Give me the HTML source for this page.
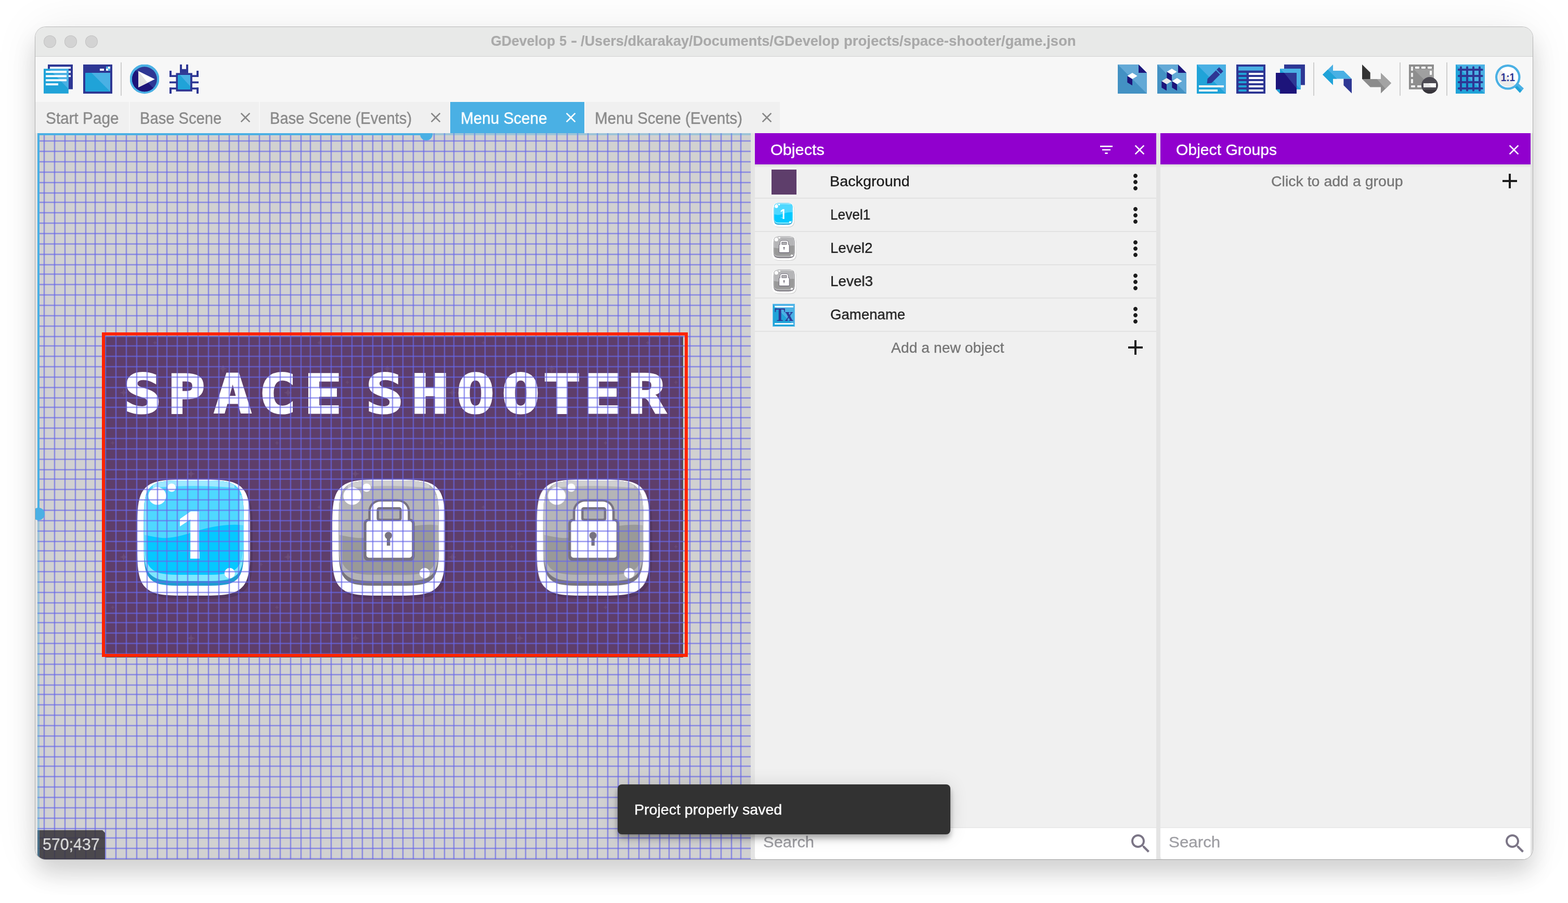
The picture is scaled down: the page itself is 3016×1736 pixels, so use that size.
<!DOCTYPE html>
<html lang="en"><head><meta charset="utf-8"><title>GDevelop 5 - /Users/dkarakay/Documents/GDevelop projects/space-shooter/game.json</title>
<style>
html,body{margin:0;padding:0;background:#fff}
body{width:3016px;height:1736px;position:relative;overflow:hidden;font-family:"Liberation Sans",sans-serif}
.ab{position:absolute;display:block}
.t{position:absolute;white-space:nowrap;transform-origin:0 0;display:block;will-change:transform;-webkit-text-stroke:.35px currentColor}
.blur{filter:blur(.6px)}
h1,h2,ul,li{margin:0;padding:0;font:inherit;list-style:none}
#shadow{position:absolute;left:68px;top:52px;width:2880px;height:1600px;border-radius:20px;box-shadow:0 0 0 1px rgba(0,0,0,.25),0 28px 44px rgba(0,0,0,.15),0 0 90px rgba(0,0,0,.07)}
#win{position:absolute;left:68px;top:52px;width:2880px;height:1600px;border-radius:20px;overflow:hidden;background:#e4e4e4}
#o{position:absolute;left:-68px;top:-52px;width:3016px;height:1736px}
</style></head>
<body>
<div id="shadow"></div>
<div id="win"><div id="o">
<header class="titlebar">
<div class="ab" style="left:68px;top:52px;width:2880px;height:56px;background:#e8e9e8"></div>
<div class="ab" style="left:68px;top:108px;width:2880px;height:1px;background:#d2d2d2"></div>
<div class="ab" style="left:84px;top:68px;width:24px;height:24px;border-radius:50%;background:#d3d3d3;box-shadow:inset 0 0 0 1px #c3c3c3"></div>
<div class="ab" style="left:124px;top:68px;width:24px;height:24px;border-radius:50%;background:#d3d3d3;box-shadow:inset 0 0 0 1px #c3c3c3"></div>
<div class="ab" style="left:164px;top:68px;width:24px;height:24px;border-radius:50%;background:#d3d3d3;box-shadow:inset 0 0 0 1px #c3c3c3"></div>
<h1 class="wtitle">
<span class="t" style="left:943.72px;top:61.64px;font-size:27px;line-height:34px;color:#a9a9a9;font-weight:bold;-webkit-text-stroke:.2px currentColor;transform:scaleX(0.9844)">GDevelop</span>
 
<span class="t" style="left:1076.30px;top:61.64px;font-size:27px;line-height:34px;color:#a9a9a9;font-weight:bold;-webkit-text-stroke:.2px currentColor;transform:scaleX(0.9267)">5</span>
 
<span class="t" style="left:1098.34px;top:61.64px;font-size:27px;line-height:34px;color:#a9a9a9;font-weight:bold;-webkit-text-stroke:.2px currentColor;transform:scaleX(1.3571)">-</span>
 
<span class="t" style="left:1117.10px;top:61.64px;font-size:27px;line-height:34px;color:#a9a9a9;font-weight:bold;-webkit-text-stroke:.2px currentColor;transform:scaleX(1.0046)">/Users/dkarakay/Documents/GDevelop</span>
 
<span class="t" style="left:1622.58px;top:61.64px;font-size:27px;line-height:34px;color:#a9a9a9;font-weight:bold;-webkit-text-stroke:.2px currentColor;transform:scaleX(1.0192)">projects/space-shooter/game.json</span>
 
</h1>
</header>
<div class="toolbar" role="toolbar">
<div class="ab" style="left:68px;top:109px;width:2880px;height:87px;background:#f7f7f7"></div>
<svg class="ab" style="left:84px;top:124px" width="56" height="57" viewBox="0 0 56 57" role="img" aria-label="Project manager"><rect x="8" y="0" width="48" height="47.5" fill="#2e3794"/><rect x="12" y="4.3" width="40" height="3.8" fill="#fff"/><rect x="48" y="12.2" width="4" height="4" fill="#fff"/><rect x="48" y="20.4" width="4" height="3.7" fill="#fff"/><rect x="0" y="8.2" width="47.8" height="47.6" fill="#20a3d8"/><path d="M10 8.2H47.8V47z" fill="#4ab0e4"/><rect x="4" y="12.2" width="40" height="3.9" fill="#fff"/><rect x="4" y="20.4" width="40" height="3.9" fill="#fff"/><rect x="4" y="28.3" width="40" height="3.9" fill="#fff"/><rect x="4" y="36.2" width="24" height="3.9" fill="#fff"/></svg>
<svg class="ab" style="left:160px;top:124px" width="56" height="57" viewBox="0 0 56 57" role="img" aria-label="Open the start page"><rect x="0" y="0" width="56" height="56" fill="#2e3794"/><rect x="4" y="16" width="48" height="36" rx="1" fill="#20a3d8"/><path d="M16 16H52V52z" fill="#4ab0e4"/><rect x="32" y="8" width="8" height="4" fill="#fff"/><rect x="44" y="4" width="8" height="8" fill="#fff"/><rect x="44" y="4" width="4" height="4" fill="#4ab0e4"/><rect x="48" y="8" width="4" height="4" fill="#4ab0e4"/></svg>
<svg class="ab" style="left:250.3px;top:124px" width="56" height="57" viewBox="0 0 56 57" role="img" aria-label="Launch a preview"><circle cx="28" cy="27.8" r="28.4" fill="#4ab0e4"/><path d="M8.2 48.1A28 28 0 0 1 8.2 8.5 28 28 0 0 0 47.8 48.1 28 28 0 0 1 8.2 48.1z" fill="#20a3d8"/><circle cx="28" cy="28.3" r="24" fill="#2e3794"/><path d="M11 45.3A24 24 0 0 1 11 11.3L28 28.3 45 45.3A24 24 0 0 1 11 45.3z" fill="#1d147a"/><path d="M16 12.6L47.8 28.3 16 44z" fill="#fff"/><path d="M16 12.6L34 35.2 16 44z" fill="#e2e2e2"/></svg>
<svg class="ab" style="left:326px;top:124px" width="56" height="57" viewBox="0 0 56 57" role="img" aria-label="Debugger"><rect x="20" y="0" width="4" height="9" fill="#2e3794"/><rect x="32" y="0" width="4" height="9" fill="#2e3794"/><rect x="20" y="8.8" width="16" height="8" fill="#2e3794"/><rect x="0" y="12" width="4" height="12" fill="#2e3794"/><rect x="0" y="20.3" width="13" height="3.6999999999999993" fill="#2e3794"/><rect x="0" y="32.5" width="13" height="3.700000000000003" fill="#2e3794"/><rect x="0" y="44.3" width="13" height="3.700000000000003" fill="#2e3794"/><rect x="0" y="44.3" width="4" height="11.700000000000003" fill="#2e3794"/><rect x="52" y="12" width="4" height="12" fill="#2e3794"/><rect x="43" y="20.3" width="13" height="3.6999999999999993" fill="#2e3794"/><rect x="43" y="32.5" width="13" height="3.700000000000003" fill="#2e3794"/><rect x="43" y="44.3" width="13" height="3.700000000000003" fill="#2e3794"/><rect x="52" y="44.3" width="4" height="11.700000000000003" fill="#2e3794"/><rect x="12.5" y="16.4" width="31.4" height="35.4" fill="#2e3794"/><rect x="16" y="20" width="24" height="28" rx="1" fill="#20a3d8"/><path d="M20 20H40V42z" fill="#4ab0e4"/></svg>
<svg class="ab" style="left:2150px;top:124px" width="56" height="57" viewBox="0 0 56 57" role="img" aria-label="Objects editor"><path d="M0 0H40L56 16V56H0z" fill="#63a9d6"/><path d="M0 0L56 56H0z" fill="#4391c3"/><path d="M40 0L56 16H40z" fill="#1d147a"/><path d="M18.3 22L28 16L37.7 22L28 28z" fill="#fff"/><path d="M18.3 22L28 28V40.2L18.3 34.4z" fill="#1d147a"/></svg>
<svg class="ab" style="left:2226px;top:124px" width="56" height="57" viewBox="0 0 56 57" role="img" aria-label="Object groups editor"><path d="M0 0H40L56 16V56H0z" fill="#63a9d6"/><path d="M0 0L56 56H0z" fill="#4391c3"/><path d="M40 0L56 16H40z" fill="#1d147a"/><path d="M18.3 14L28 8L37.7 14L28 20z" fill="#fff"/><path d="M18.3 14L28 20V32.2L18.3 26.4z" fill="#1d147a"/><path d="M8.3 32L18 26L27.7 32L18 38z" fill="#e9e9e9"/><path d="M8.3 32L18 38V50.2L8.3 44.4z" fill="#1d147a"/><path d="M28.3 32L38 26L47.7 32L38 38z" fill="#fff"/><path d="M28.3 32L38 38V50.2L28.3 44.4z" fill="#1d147a"/></svg>
<svg class="ab" style="left:2302px;top:124px" width="56" height="57" viewBox="0 0 56 57" role="img" aria-label="Properties"><rect width="56" height="56" fill="#4ab0e4"/><path d="M0 0L56 56H0z" fill="#20a3d8"/><g transform="translate(19.6 36.4) rotate(-45)"><path d="M0 0L7 -5.6H30V5.6H7z" fill="#2e3794"/><rect x="31.6" y="-5.6" width="7" height="11.2" fill="#2e3794"/></g><rect x="4" y="40" width="48" height="4" fill="#f4f4f4"/><rect x="4" y="48" width="36" height="4" fill="#f4f4f4"/></svg>
<svg class="ab" style="left:2378px;top:124px" width="56" height="57" viewBox="0 0 56 57" role="img" aria-label="Instances list"><rect width="56" height="56" fill="#2e3794"/><rect x="4" y="4" width="48" height="7.6" fill="#4ab0e4"/><rect x="4" y="16" width="16" height="4" rx="2" fill="#20a3d8"/><rect x="24" y="16" width="28" height="4" fill="#fff"/><rect x="4" y="24" width="16" height="4" rx="2" fill="#20a3d8"/><rect x="24" y="24" width="28" height="4" fill="#fff"/><rect x="4" y="32" width="16" height="4" rx="2" fill="#20a3d8"/><rect x="24" y="32" width="28" height="4" fill="#fff"/><rect x="4" y="40" width="16" height="4" rx="2" fill="#20a3d8"/><rect x="24" y="40" width="28" height="4" fill="#fff"/><rect x="4" y="48" width="16" height="4" rx="2" fill="#20a3d8"/><rect x="24" y="48" width="28" height="4" fill="#fff"/></svg>
<svg class="ab" style="left:2454px;top:124px" width="56" height="57" viewBox="0 0 56 57" role="img" aria-label="Layers"><rect x="16" y="0" width="40" height="39.5" fill="#2e3794"/><rect x="8" y="8" width="40" height="39.7" fill="#4ab0e4"/><path d="M8 8L16 16H8z" fill="#20a3d8"/><path d="M40 39.7L48 47.7H40z" fill="#20a3d8"/><rect x="0" y="16" width="40" height="40" fill="#1d147a"/><path d="M16 16H40V46z" fill="#2e3794"/><path d="M0 47.7H8V56z" fill="#20a3d8"/><path d="M0 47.7V56H8z" fill="#f7f7f7"/></svg>
<svg class="ab" style="left:2544px;top:124px" width="56" height="57" viewBox="0 0 56 57" role="img" aria-label="Undo"><path d="M0 19.4L20 0V12H40.4L56 27.4H20V39.4z" fill="#4ab0e4"/><path d="M0 19.4L10 9.7 27.6 27.4H20V39.4z" fill="#20a3d8"/><path d="M40.4 27.4H56V55.6L40.4 40z" fill="#2e3794"/></svg>
<svg class="ab" style="left:2620px;top:124px" width="56" height="57" viewBox="0 0 56 57" role="img" aria-label="Redo"><path d="M0 0L15.7 15.5V28H0z" fill="#333"/><path d="M0 28H36V16.2L56 35.8L36 55.6V43.4H15.7z" fill="#8c8c8c"/><path d="M28.5 28H36V16.2L56 35.8L45 46.7z" fill="#a3a3a3"/></svg>
<svg class="ab" style="left:2710px;top:124px" width="56" height="57" viewBox="0 0 56 57" role="img" aria-label="Delete the selected instances"><rect x="0" y="0" width="48" height="47.8" fill="#8e8e8e"/><path d="M9 9H48V47.8z" fill="#a0a0a0"/><rect x="12" y="4" width="8" height="4" rx="1" fill="#fff"/><rect x="24" y="4" width="8" height="4" rx="1" fill="#fff"/><rect x="36" y="4" width="8" height="4" rx="1" fill="#fff"/><rect x="4" y="4" width="4" height="8" rx="1" fill="#f0f0f0"/><rect x="4" y="16" width="4" height="8" rx="1" fill="#f0f0f0"/><rect x="4" y="28" width="4" height="8" rx="1" fill="#f0f0f0"/><rect x="40" y="12" width="4" height="8" rx="1" fill="#fff"/><rect x="4" y="40" width="8" height="4" rx="1" fill="#f0f0f0"/><rect x="16" y="40" width="8" height="4" rx="1" fill="#f0f0f0"/><circle cx="40" cy="40" r="16" fill="#4c4a52"/><path d="M26.4 48.5A16 16 0 0 0 53.6 48.5z" fill="#37353b"/><rect x="28" y="36" width="24" height="8" fill="#fff"/><path d="M28 36H38L44 44H28z" fill="#e8e8e8"/></svg>
<svg class="ab" style="left:2800px;top:124px" width="56" height="57" viewBox="0 0 56 57" role="img" aria-label="Toggle grid"><rect width="56" height="56" fill="#4ab0e4"/><path d="M0 0L56 56H0z" fill="#20a3d8"/><path d="M16 16H40V40z M16 16z" fill="#4ab0e4" opacity=".0"/><rect x="8" y="3.5" width="4" height="48" rx="1.5" fill="#2e3794"/><rect x="4" y="8" width="48.5" height="4" rx="1.5" fill="#2e3794"/><rect x="20" y="3.5" width="4" height="48" rx="1.5" fill="#2e3794"/><rect x="4" y="20" width="48.5" height="4" rx="1.5" fill="#2e3794"/><rect x="32" y="3.5" width="4" height="48" rx="1.5" fill="#2e3794"/><rect x="4" y="32" width="48.5" height="4" rx="1.5" fill="#2e3794"/><rect x="44" y="3.5" width="4" height="48" rx="1.5" fill="#2e3794"/><rect x="4" y="44" width="48.5" height="4" rx="1.5" fill="#2e3794"/></svg>
<svg class="ab" style="left:2874px;top:124px" width="58" height="57" viewBox="0 0 58 57" role="img" aria-label="Zoom"><path d="M36 40L43 33 57 46 49.5 54.5z" fill="#4ab0e4"/><path d="M36 40L39.5 36.5 53.2 50.3 49.5 54.5z" fill="#20a3d8"/><circle cx="26.3" cy="24.3" r="24.3" fill="#4ab0e4"/><circle cx="26.3" cy="24.3" r="20" fill="#fff"/><path d="M12.2 10.2A20 20 0 0 0 40.4 38.4z" fill="#ebebeb"/><text x="26.4" y="31.8" text-anchor="middle" style="font-family:'Liberation Sans',sans-serif" font-weight="bold" font-size="22" fill="#2e3794" textLength="27.5" lengthAdjust="spacingAndGlyphs">1:1</text></svg>
<div class="ab" style="left:232px;top:120px;width:2px;height:64px;background:#cfcfcf"></div>
<div class="ab" style="left:2526px;top:120px;width:2px;height:64px;background:#cfcfcf"></div>
<div class="ab" style="left:2692px;top:120px;width:2px;height:64px;background:#cfcfcf"></div>
<div class="ab" style="left:2782px;top:120px;width:2px;height:64px;background:#cfcfcf"></div>
</div>
<nav class="tabs" role="tablist">
<div class="ab" style="left:68px;top:196px;width:2880px;height:60px;background:#f7f7f7"></div>
<div role="tab" aria-selected="false">
<div class="ab" style="left:68px;top:196px;width:180px;height:60px;background:#f0f0f0"></div>
<span class="t" style="left:87.79px;top:207.76px;font-size:31px;line-height:39px;color:#878787;transform:scaleX(0.9592)">Start Page</span>
</div>
<div role="tab" aria-selected="false">
<div class="ab" style="left:250px;top:196px;width:248px;height:60px;background:#f0f0f0"></div>
<span class="t" style="left:268.72px;top:207.76px;font-size:31px;line-height:39px;color:#878787;transform:scaleX(0.9400)">Base Scene</span>
<svg class="ab" style="left:455.7px;top:210.2px" width="32" height="32" viewBox="0 0 24 24"><path d="M19 6.41L17.59 5 12 10.59 6.41 5 5 6.41 10.59 12 5 17.59 6.41 19 12 13.41 17.59 19 19 17.59 13.41 12z" fill="#878787"/></svg>
</div>
<div role="tab" aria-selected="false">
<div class="ab" style="left:500px;top:196px;width:364px;height:60px;background:#f0f0f0"></div>
<span class="t" style="left:518.63px;top:207.76px;font-size:31px;line-height:39px;color:#878787;transform:scaleX(0.9372)">Base Scene (Events)</span>
<svg class="ab" style="left:822.2px;top:210.2px" width="32" height="32" viewBox="0 0 24 24"><path d="M19 6.41L17.59 5 12 10.59 6.41 5 5 6.41 10.59 12 5 17.59 6.41 19 12 13.41 17.59 19 19 17.59 13.41 12z" fill="#878787"/></svg>
</div>
<div role="tab" aria-selected="true">
<div class="ab" style="left:866px;top:196px;width:258px;height:60px;background:#4ab0e4"></div>
<span class="t" style="left:885.99px;top:207.76px;font-size:31px;line-height:39px;color:#fff;transform:scaleX(0.9560)">Menu Scene</span>
<svg class="ab" style="left:1082.0px;top:210.2px" width="32" height="32" viewBox="0 0 24 24"><path d="M19 6.41L17.59 5 12 10.59 6.41 5 5 6.41 10.59 12 5 17.59 6.41 19 12 13.41 17.59 19 19 17.59 13.41 12z" fill="#fff"/></svg>
</div>
<div role="tab" aria-selected="false">
<div class="ab" style="left:1126px;top:196px;width:374px;height:60px;background:#f0f0f0"></div>
<span class="t" style="left:1144.29px;top:207.76px;font-size:31px;line-height:39px;color:#878787;transform:scaleX(0.9526)">Menu Scene (Events)</span>
<svg class="ab" style="left:1458.7px;top:210.2px" width="32" height="32" viewBox="0 0 24 24"><path d="M19 6.41L17.59 5 12 10.59 6.41 5 5 6.41 10.59 12 5 17.59 6.41 19 12 13.41 17.59 19 19 17.59 13.41 12z" fill="#878787"/></svg>
</div>
</nav>
<div class="ab" style="left:68px;top:256px;width:2880px;height:1396px;background:#e4e4e4"></div>
<main class="scene-editor">
<svg class="ab" id="scene" style="left:72px;top:256px" width="1372" height="1396" viewBox="0 0 1372 1396"><defs><clipPath id="cb"><path d="M205.0 103.0L204.9 136.9L204.7 147.7L204.3 155.5L203.7 161.8L202.9 167.1L202.0 171.8L200.9 175.9L199.6 179.5L198.2 182.8L196.5 185.8L194.6 188.5L192.5 190.9L190.2 193.1L187.7 195.1L184.8 196.8L181.7 198.4L178.2 199.7L174.3 200.9L169.9 201.8L164.8 202.6L158.8 203.2L151.4 203.7L141.1 203.9L108.8 204.0L76.4 203.9L66.1 203.7L58.7 203.2L52.7 202.6L47.6 201.8L43.2 200.9L39.3 199.7L35.8 198.4L32.7 196.8L29.8 195.1L27.3 193.1L25.0 190.9L22.9 188.5L21.0 185.8L19.3 182.8L17.9 179.5L16.6 175.9L15.5 171.8L14.6 167.1L13.8 161.8L13.2 155.5L12.8 147.7L12.6 136.9L12.5 103.0L12.6 69.1L12.8 58.3L13.2 50.5L13.8 44.2L14.6 38.9L15.5 34.2L16.6 30.1L17.9 26.5L19.3 23.2L21.0 20.2L22.9 17.5L25.0 15.1L27.3 12.9L29.8 10.9L32.7 9.2L35.8 7.6L39.3 6.3L43.2 5.1L47.6 4.2L52.7 3.4L58.7 2.8L66.1 2.3L76.4 2.1L108.7 2.0L141.1 2.1L151.4 2.3L158.8 2.8L164.8 3.4L169.9 4.2L174.3 5.1L178.2 6.3L181.7 7.6L184.8 9.2L187.7 10.9L190.2 12.9L192.5 15.1L194.6 17.5L196.5 20.2L198.2 23.2L199.6 26.5L200.9 30.1L202.0 34.2L202.9 38.9L203.7 44.2L204.3 50.5L204.7 58.3L204.9 69.1z"/></clipPath><clipPath id="cb9"><path d="M205.0 94.0L204.9 127.9L204.7 138.7L204.3 146.5L203.7 152.8L202.9 158.1L202.0 162.8L200.9 166.9L199.6 170.5L198.2 173.8L196.5 176.8L194.6 179.5L192.5 181.9L190.2 184.1L187.7 186.1L184.8 187.8L181.7 189.4L178.2 190.7L174.3 191.9L169.9 192.8L164.8 193.6L158.8 194.2L151.4 194.7L141.1 194.9L108.8 195.0L76.4 194.9L66.1 194.7L58.7 194.2L52.7 193.6L47.6 192.8L43.2 191.9L39.3 190.7L35.8 189.4L32.7 187.8L29.8 186.1L27.3 184.1L25.0 181.9L22.9 179.5L21.0 176.8L19.3 173.8L17.9 170.5L16.6 166.9L15.5 162.8L14.6 158.1L13.8 152.8L13.2 146.5L12.8 138.7L12.6 127.9L12.5 94.0L12.6 60.1L12.8 49.3L13.2 41.5L13.8 35.2L14.6 29.9L15.5 25.2L16.6 21.1L17.9 17.5L19.3 14.2L21.0 11.2L22.9 8.5L25.0 6.1L27.3 3.9L29.8 1.9L32.7 0.2L35.8 -1.4L39.3 -2.7L43.2 -3.9L47.6 -4.8L52.7 -5.6L58.7 -6.2L66.1 -6.7L76.4 -6.9L108.7 -7.0L141.1 -6.9L151.4 -6.7L158.8 -6.2L164.8 -5.6L169.9 -4.8L174.3 -3.9L178.2 -2.7L181.7 -1.4L184.8 0.2L187.7 1.9L190.2 3.9L192.5 6.1L194.6 8.5L196.5 11.2L198.2 14.2L199.6 17.5L200.9 21.1L202.0 25.2L202.9 29.9L203.7 35.2L204.3 41.5L204.7 49.3L204.9 60.1z"/></clipPath><clipPath id="cb21"><path d="M204.0 82.0L203.9 115.9L203.7 126.7L203.3 134.5L202.7 140.8L201.9 146.1L201.0 150.8L199.9 154.9L198.7 158.5L197.2 161.8L195.6 164.8L193.7 167.5L191.7 169.9L189.4 172.1L186.8 174.1L184.0 175.8L180.9 177.4L177.5 178.7L173.6 179.9L169.2 180.8L164.2 181.6L158.3 182.2L150.9 182.7L140.7 182.9L108.8 183.0L76.8 182.9L66.6 182.7L59.2 182.2L53.3 181.6L48.3 180.8L43.9 179.9L40.0 178.7L36.6 177.4L33.5 175.8L30.7 174.1L28.1 172.1L25.8 169.9L23.8 167.5L21.9 164.8L20.3 161.8L18.8 158.5L17.6 154.9L16.5 150.8L15.6 146.1L14.8 140.8L14.2 134.5L13.8 126.7L13.6 115.9L13.5 82.0L13.6 48.1L13.8 37.3L14.2 29.5L14.8 23.2L15.6 17.9L16.5 13.2L17.6 9.1L18.8 5.5L20.3 2.2L21.9 -0.8L23.8 -3.5L25.8 -5.9L28.1 -8.1L30.7 -10.1L33.5 -11.8L36.6 -13.4L40.0 -14.7L43.9 -15.9L48.3 -16.8L53.3 -17.6L59.2 -18.2L66.6 -18.7L76.8 -18.9L108.7 -19.0L140.7 -18.9L150.9 -18.7L158.3 -18.2L164.2 -17.6L169.2 -16.8L173.6 -15.9L177.5 -14.7L180.9 -13.4L184.0 -11.8L186.8 -10.1L189.4 -8.1L191.7 -5.9L193.7 -3.5L195.6 -0.8L197.2 2.2L198.7 5.5L199.9 9.1L201.0 13.2L201.9 17.9L202.7 23.2L203.3 29.5L203.7 37.3L203.9 48.1z"/></clipPath><symbol id="btn1" viewBox="0 0 223 230" preserveAspectRatio="none"><path d="M217.0 111.5L216.9 144.7L216.6 156.6L216.1 165.4L215.3 172.6L214.4 178.8L213.2 184.3L211.9 189.1L210.3 193.4L208.5 197.4L206.4 200.9L204.1 204.2L201.5 207.1L198.7 209.7L195.5 212.1L192.1 214.2L188.2 216.1L184.0 217.7L179.3 219.1L174.0 220.3L168.0 221.3L161.0 222.0L152.4 222.6L140.8 222.9L108.5 223.0L76.2 222.9L64.6 222.6L56.0 222.0L49.0 221.3L43.0 220.3L37.7 219.1L33.0 217.7L28.8 216.1L24.9 214.2L21.5 212.1L18.3 209.7L15.5 207.1L12.9 204.2L10.6 200.9L8.5 197.4L6.7 193.4L5.1 189.1L3.8 184.3L2.6 178.8L1.7 172.6L0.9 165.4L0.4 156.6L0.1 144.7L0.0 111.5L0.1 78.3L0.4 66.4L0.9 57.6L1.7 50.4L2.6 44.2L3.8 38.7L5.1 33.9L6.7 29.6L8.5 25.6L10.6 22.1L12.9 18.8L15.5 15.9L18.3 13.3L21.5 10.9L24.9 8.8L28.8 6.9L33.0 5.3L37.7 3.9L43.0 2.7L49.0 1.7L56.0 1.0L64.6 0.4L76.2 0.1L108.5 0.0L140.8 0.1L152.4 0.4L161.0 1.0L168.0 1.7L174.0 2.7L179.3 3.9L184.0 5.3L188.2 6.9L192.1 8.8L195.5 10.9L198.7 13.3L201.5 15.9L204.1 18.8L206.4 22.1L208.5 25.6L210.3 29.6L211.9 33.9L213.2 38.7L214.4 44.2L215.3 50.4L216.1 57.6L216.6 66.4L216.9 78.3z" transform="translate(5 6)" fill="#000" opacity=".12"/><path d="M217.0 111.5L216.9 144.7L216.6 156.6L216.1 165.4L215.3 172.6L214.4 178.8L213.2 184.3L211.9 189.1L210.3 193.4L208.5 197.4L206.4 200.9L204.1 204.2L201.5 207.1L198.7 209.7L195.5 212.1L192.1 214.2L188.2 216.1L184.0 217.7L179.3 219.1L174.0 220.3L168.0 221.3L161.0 222.0L152.4 222.6L140.8 222.9L108.5 223.0L76.2 222.9L64.6 222.6L56.0 222.0L49.0 221.3L43.0 220.3L37.7 219.1L33.0 217.7L28.8 216.1L24.9 214.2L21.5 212.1L18.3 209.7L15.5 207.1L12.9 204.2L10.6 200.9L8.5 197.4L6.7 193.4L5.1 189.1L3.8 184.3L2.6 178.8L1.7 172.6L0.9 165.4L0.4 156.6L0.1 144.7L0.0 111.5L0.1 78.3L0.4 66.4L0.9 57.6L1.7 50.4L2.6 44.2L3.8 38.7L5.1 33.9L6.7 29.6L8.5 25.6L10.6 22.1L12.9 18.8L15.5 15.9L18.3 13.3L21.5 10.9L24.9 8.8L28.8 6.9L33.0 5.3L37.7 3.9L43.0 2.7L49.0 1.7L56.0 1.0L64.6 0.4L76.2 0.1L108.5 0.0L140.8 0.1L152.4 0.4L161.0 1.0L168.0 1.7L174.0 2.7L179.3 3.9L184.0 5.3L188.2 6.9L192.1 8.8L195.5 10.9L198.7 13.3L201.5 15.9L204.1 18.8L206.4 22.1L208.5 25.6L210.3 29.6L211.9 33.9L213.2 38.7L214.4 44.2L215.3 50.4L216.1 57.6L216.6 66.4L216.9 78.3z" fill="#fff"/><path d="M205.0 103.0L204.9 136.9L204.7 147.7L204.3 155.5L203.7 161.8L202.9 167.1L202.0 171.8L200.9 175.9L199.6 179.5L198.2 182.8L196.5 185.8L194.6 188.5L192.5 190.9L190.2 193.1L187.7 195.1L184.8 196.8L181.7 198.4L178.2 199.7L174.3 200.9L169.9 201.8L164.8 202.6L158.8 203.2L151.4 203.7L141.1 203.9L108.8 204.0L76.4 203.9L66.1 203.7L58.7 203.2L52.7 202.6L47.6 201.8L43.2 200.9L39.3 199.7L35.8 198.4L32.7 196.8L29.8 195.1L27.3 193.1L25.0 190.9L22.9 188.5L21.0 185.8L19.3 182.8L17.9 179.5L16.6 175.9L15.5 171.8L14.6 167.1L13.8 161.8L13.2 155.5L12.8 147.7L12.6 136.9L12.5 103.0L12.6 69.1L12.8 58.3L13.2 50.5L13.8 44.2L14.6 38.9L15.5 34.2L16.6 30.1L17.9 26.5L19.3 23.2L21.0 20.2L22.9 17.5L25.0 15.1L27.3 12.9L29.8 10.9L32.7 9.2L35.8 7.6L39.3 6.3L43.2 5.1L47.6 4.2L52.7 3.4L58.7 2.8L66.1 2.3L76.4 2.1L108.7 2.0L141.1 2.1L151.4 2.3L158.8 2.8L164.8 3.4L169.9 4.2L174.3 5.1L178.2 6.3L181.7 7.6L184.8 9.2L187.7 10.9L190.2 12.9L192.5 15.1L194.6 17.5L196.5 20.2L198.2 23.2L199.6 26.5L200.9 30.1L202.0 34.2L202.9 38.9L203.7 44.2L204.3 50.5L204.7 58.3L204.9 69.1z" fill="#1f9dd2"/><g clip-path="url(#cb)"><path d="M205.0 94.0L204.9 127.9L204.7 138.7L204.3 146.5L203.7 152.8L202.9 158.1L202.0 162.8L200.9 166.9L199.6 170.5L198.2 173.8L196.5 176.8L194.6 179.5L192.5 181.9L190.2 184.1L187.7 186.1L184.8 187.8L181.7 189.4L178.2 190.7L174.3 191.9L169.9 192.8L164.8 193.6L158.8 194.2L151.4 194.7L141.1 194.9L108.8 195.0L76.4 194.9L66.1 194.7L58.7 194.2L52.7 193.6L47.6 192.8L43.2 191.9L39.3 190.7L35.8 189.4L32.7 187.8L29.8 186.1L27.3 184.1L25.0 181.9L22.9 179.5L21.0 176.8L19.3 173.8L17.9 170.5L16.6 166.9L15.5 162.8L14.6 158.1L13.8 152.8L13.2 146.5L12.8 138.7L12.6 127.9L12.5 94.0L12.6 60.1L12.8 49.3L13.2 41.5L13.8 35.2L14.6 29.9L15.5 25.2L16.6 21.1L17.9 17.5L19.3 14.2L21.0 11.2L22.9 8.5L25.0 6.1L27.3 3.9L29.8 1.9L32.7 0.2L35.8 -1.4L39.3 -2.7L43.2 -3.9L47.6 -4.8L52.7 -5.6L58.7 -6.2L66.1 -6.7L76.4 -6.9L108.7 -7.0L141.1 -6.9L151.4 -6.7L158.8 -6.2L164.8 -5.6L169.9 -4.8L174.3 -3.9L178.2 -2.7L181.7 -1.4L184.8 0.2L187.7 1.9L190.2 3.9L192.5 6.1L194.6 8.5L196.5 11.2L198.2 14.2L199.6 17.5L200.9 21.1L202.0 25.2L202.9 29.9L203.7 35.2L204.3 41.5L204.7 49.3L204.9 60.1z" fill="#7de8ff"/><g clip-path="url(#cb21)"><rect width="217" height="223" fill="#05c8ff"/><path d="M0 0H217V90C190 83 150 88 119 97.6C95 105 70 114 47 112C30 110 20 107 0 104z" fill="#4fd8ff"/><path d="M30 0H187V16C140 11 77 11 30 16z" fill="#fff" opacity="0.45"/><rect x="12" y="30" width="8" height="150" fill="#fff" opacity="0.32"/><rect x="197" y="30" width="9" height="150" fill="#fff" opacity="0.32"/></g></g><circle cx="38.5" cy="31.6" r="17" fill="#fff"/><circle cx="66.2" cy="15.5" r="8" fill="#fff"/><circle cx="177.8" cy="179.8" r="10" fill="#fff"/><clipPath id="c1"><path d="M0 -95.0H49.6V2H30.6V-13.8H0z"/></clipPath><g transform="translate(73.8 152) scale(0.924 1)"><text clip-path="url(#c1)" style="font-family:'Liberation Sans',sans-serif" font-weight="bold" font-size="131.9" fill="#fff">1</text></g></symbol><symbol id="btn2" viewBox="0 0 223 230" preserveAspectRatio="none"><path d="M217.0 111.5L216.9 144.7L216.6 156.6L216.1 165.4L215.3 172.6L214.4 178.8L213.2 184.3L211.9 189.1L210.3 193.4L208.5 197.4L206.4 200.9L204.1 204.2L201.5 207.1L198.7 209.7L195.5 212.1L192.1 214.2L188.2 216.1L184.0 217.7L179.3 219.1L174.0 220.3L168.0 221.3L161.0 222.0L152.4 222.6L140.8 222.9L108.5 223.0L76.2 222.9L64.6 222.6L56.0 222.0L49.0 221.3L43.0 220.3L37.7 219.1L33.0 217.7L28.8 216.1L24.9 214.2L21.5 212.1L18.3 209.7L15.5 207.1L12.9 204.2L10.6 200.9L8.5 197.4L6.7 193.4L5.1 189.1L3.8 184.3L2.6 178.8L1.7 172.6L0.9 165.4L0.4 156.6L0.1 144.7L0.0 111.5L0.1 78.3L0.4 66.4L0.9 57.6L1.7 50.4L2.6 44.2L3.8 38.7L5.1 33.9L6.7 29.6L8.5 25.6L10.6 22.1L12.9 18.8L15.5 15.9L18.3 13.3L21.5 10.9L24.9 8.8L28.8 6.9L33.0 5.3L37.7 3.9L43.0 2.7L49.0 1.7L56.0 1.0L64.6 0.4L76.2 0.1L108.5 0.0L140.8 0.1L152.4 0.4L161.0 1.0L168.0 1.7L174.0 2.7L179.3 3.9L184.0 5.3L188.2 6.9L192.1 8.8L195.5 10.9L198.7 13.3L201.5 15.9L204.1 18.8L206.4 22.1L208.5 25.6L210.3 29.6L211.9 33.9L213.2 38.7L214.4 44.2L215.3 50.4L216.1 57.6L216.6 66.4L216.9 78.3z" transform="translate(5 6)" fill="#000" opacity=".12"/><path d="M217.0 111.5L216.9 144.7L216.6 156.6L216.1 165.4L215.3 172.6L214.4 178.8L213.2 184.3L211.9 189.1L210.3 193.4L208.5 197.4L206.4 200.9L204.1 204.2L201.5 207.1L198.7 209.7L195.5 212.1L192.1 214.2L188.2 216.1L184.0 217.7L179.3 219.1L174.0 220.3L168.0 221.3L161.0 222.0L152.4 222.6L140.8 222.9L108.5 223.0L76.2 222.9L64.6 222.6L56.0 222.0L49.0 221.3L43.0 220.3L37.7 219.1L33.0 217.7L28.8 216.1L24.9 214.2L21.5 212.1L18.3 209.7L15.5 207.1L12.9 204.2L10.6 200.9L8.5 197.4L6.7 193.4L5.1 189.1L3.8 184.3L2.6 178.8L1.7 172.6L0.9 165.4L0.4 156.6L0.1 144.7L0.0 111.5L0.1 78.3L0.4 66.4L0.9 57.6L1.7 50.4L2.6 44.2L3.8 38.7L5.1 33.9L6.7 29.6L8.5 25.6L10.6 22.1L12.9 18.8L15.5 15.9L18.3 13.3L21.5 10.9L24.9 8.8L28.8 6.9L33.0 5.3L37.7 3.9L43.0 2.7L49.0 1.7L56.0 1.0L64.6 0.4L76.2 0.1L108.5 0.0L140.8 0.1L152.4 0.4L161.0 1.0L168.0 1.7L174.0 2.7L179.3 3.9L184.0 5.3L188.2 6.9L192.1 8.8L195.5 10.9L198.7 13.3L201.5 15.9L204.1 18.8L206.4 22.1L208.5 25.6L210.3 29.6L211.9 33.9L213.2 38.7L214.4 44.2L215.3 50.4L216.1 57.6L216.6 66.4L216.9 78.3z" fill="#fff"/><path d="M205.0 103.0L204.9 136.9L204.7 147.7L204.3 155.5L203.7 161.8L202.9 167.1L202.0 171.8L200.9 175.9L199.6 179.5L198.2 182.8L196.5 185.8L194.6 188.5L192.5 190.9L190.2 193.1L187.7 195.1L184.8 196.8L181.7 198.4L178.2 199.7L174.3 200.9L169.9 201.8L164.8 202.6L158.8 203.2L151.4 203.7L141.1 203.9L108.8 204.0L76.4 203.9L66.1 203.7L58.7 203.2L52.7 202.6L47.6 201.8L43.2 200.9L39.3 199.7L35.8 198.4L32.7 196.8L29.8 195.1L27.3 193.1L25.0 190.9L22.9 188.5L21.0 185.8L19.3 182.8L17.9 179.5L16.6 175.9L15.5 171.8L14.6 167.1L13.8 161.8L13.2 155.5L12.8 147.7L12.6 136.9L12.5 103.0L12.6 69.1L12.8 58.3L13.2 50.5L13.8 44.2L14.6 38.9L15.5 34.2L16.6 30.1L17.9 26.5L19.3 23.2L21.0 20.2L22.9 17.5L25.0 15.1L27.3 12.9L29.8 10.9L32.7 9.2L35.8 7.6L39.3 6.3L43.2 5.1L47.6 4.2L52.7 3.4L58.7 2.8L66.1 2.3L76.4 2.1L108.7 2.0L141.1 2.1L151.4 2.3L158.8 2.8L164.8 3.4L169.9 4.2L174.3 5.1L178.2 6.3L181.7 7.6L184.8 9.2L187.7 10.9L190.2 12.9L192.5 15.1L194.6 17.5L196.5 20.2L198.2 23.2L199.6 26.5L200.9 30.1L202.0 34.2L202.9 38.9L203.7 44.2L204.3 50.5L204.7 58.3L204.9 69.1z" fill="#78757d"/><g clip-path="url(#cb)"><path d="M205.0 94.0L204.9 127.9L204.7 138.7L204.3 146.5L203.7 152.8L202.9 158.1L202.0 162.8L200.9 166.9L199.6 170.5L198.2 173.8L196.5 176.8L194.6 179.5L192.5 181.9L190.2 184.1L187.7 186.1L184.8 187.8L181.7 189.4L178.2 190.7L174.3 191.9L169.9 192.8L164.8 193.6L158.8 194.2L151.4 194.7L141.1 194.9L108.8 195.0L76.4 194.9L66.1 194.7L58.7 194.2L52.7 193.6L47.6 192.8L43.2 191.9L39.3 190.7L35.8 189.4L32.7 187.8L29.8 186.1L27.3 184.1L25.0 181.9L22.9 179.5L21.0 176.8L19.3 173.8L17.9 170.5L16.6 166.9L15.5 162.8L14.6 158.1L13.8 152.8L13.2 146.5L12.8 138.7L12.6 127.9L12.5 94.0L12.6 60.1L12.8 49.3L13.2 41.5L13.8 35.2L14.6 29.9L15.5 25.2L16.6 21.1L17.9 17.5L19.3 14.2L21.0 11.2L22.9 8.5L25.0 6.1L27.3 3.9L29.8 1.9L32.7 0.2L35.8 -1.4L39.3 -2.7L43.2 -3.9L47.6 -4.8L52.7 -5.6L58.7 -6.2L66.1 -6.7L76.4 -6.9L108.7 -7.0L141.1 -6.9L151.4 -6.7L158.8 -6.2L164.8 -5.6L169.9 -4.8L174.3 -3.9L178.2 -2.7L181.7 -1.4L184.8 0.2L187.7 1.9L190.2 3.9L192.5 6.1L194.6 8.5L196.5 11.2L198.2 14.2L199.6 17.5L200.9 21.1L202.0 25.2L202.9 29.9L203.7 35.2L204.3 41.5L204.7 49.3L204.9 60.1z" fill="#b4b4b6"/><g clip-path="url(#cb21)"><rect width="217" height="223" fill="#999999"/><path d="M0 0H217V90C190 83 150 88 119 97.6C95 105 70 114 47 112C30 110 20 107 0 104z" fill="#b5b5b7"/><path d="M30 0H187V16C140 11 77 11 30 16z" fill="#fff" opacity="0.35"/><rect x="12" y="30" width="8" height="150" fill="#fff" opacity="0.24"/><rect x="197" y="30" width="9" height="150" fill="#fff" opacity="0.24"/></g></g><circle cx="38.5" cy="31.6" r="17" fill="#fff"/><circle cx="66.2" cy="15.5" r="8" fill="#fff"/><circle cx="177.8" cy="179.8" r="10" fill="#fff"/><rect x="69.4" y="37.8" width="80.4" height="60" rx="24" fill="#77727f"/><rect x="60.5" y="75.3" width="98.2" height="81.3" rx="9" fill="#77727f"/><rect x="73.9" y="42.3" width="71.4" height="55" rx="19" fill="#fff"/><rect x="65.8" y="79.8" width="87.5" height="70.5" rx="5" fill="#fff"/><rect x="85.5" y="53" width="48.2" height="26.8" rx="5" fill="#77727f"/><rect x="90" y="57.5" width="39.2" height="17.8" rx="2" fill="#b2b2b4"/><circle cx="108.1" cy="107.5" r="7" fill="#77727f"/><rect x="105" y="110" width="6.4" height="17" fill="#77727f"/></symbol></defs><rect width="1372" height="1396" fill="#d1d1d1"/><rect x="131" y="391" width="1110" height="616" fill="#5e3e6b"/><defs><pattern id="stars" x="131" y="391" width="316" height="316" patternUnits="userSpaceOnUse"><g fill="#7a5f88" stroke="#7a5f88" stroke-width="1.2"><path d="M226 55Q226 62 233 62Q226 62 226 69Q226 62 219 62Q226 62 226 55z" opacity="0.4"/><path d="M35 101Q35 108 42 108Q35 108 35 115Q35 108 28 108Q35 108 35 101z" opacity="0.4"/><path d="M164.5 257Q164.5 264 171.5 264Q164.5 264 164.5 271Q164.5 264 157.5 264Q164.5 264 164.5 257z" opacity="0.4"/><path d="M95 8.5Q95 12 98.5 12Q95 12 95 15.5Q95 12 91.5 12Q95 12 95 8.5z" opacity="0.35"/><path d="M149 84.5Q149 88 152.5 88Q149 88 149 91.5Q149 88 145.5 88Q149 88 149 84.5z" opacity="0.3"/><path d="M299 118.5Q299 122 302.5 122Q299 122 299 125.5Q299 122 295.5 122Q299 122 299 118.5z" opacity="0.3"/><path d="M13.7 201.0Q13.7 204.5 17.2 204.5Q13.7 204.5 13.7 208.0Q13.7 204.5 10.2 204.5Q13.7 204.5 13.7 201.0z" opacity="0.3"/><path d="M155 153.4Q155 156.4 158 156.4Q155 156.4 155 159.4Q155 156.4 152 156.4Q155 156.4 155 153.4z" opacity="0.25"/></g></pattern></defs><rect x="131" y="391" width="1110" height="616" fill="url(#stars)"/><rect x="131" y="391" width="1110" height="616" fill="none" stroke="#505050" stroke-width="2"/><g style="filter:blur(.6px)"><text transform="translate(0 538.0) scale(1.166 1)" x="142.4 214.7 291.0 364.9 439.9 491.2 541.6 616.9 691.5 766.1 834.0 901.3 974.2" y="0" style="font-family:'DejaVu Sans Mono',monospace" font-weight="bold" font-size="103.5" fill="#fff" stroke="#fff" stroke-width="3.2" stroke-linejoin="miter">SPACE SHOOTER</text><use href="#btn1" x="192" y="666" width="223" height="230"/><use href="#btn2" x="567" y="666" width="223" height="230"/><use href="#btn2" x="960.5" y="666" width="223" height="230"/></g><g fill="#6868e8" shape-rendering="crispEdges"><path d="M11 0h4v1396h-4zM31 0h4v1396h-4zM51 0h4v1396h-4zM71 0h4v1396h-4zM91 0h4v1396h-4zM109 0h4v1396h-4zM129 0h4v1396h-4zM149 0h4v1396h-4zM169 0h4v1396h-4zM189 0h4v1396h-4zM209 0h4v1396h-4zM229 0h4v1396h-4zM247 0h4v1396h-4zM267 0h4v1396h-4zM287 0h4v1396h-4zM307 0h4v1396h-4zM327 0h4v1396h-4zM347 0h4v1396h-4zM367 0h4v1396h-4zM385 0h4v1396h-4zM405 0h4v1396h-4zM425 0h4v1396h-4zM445 0h4v1396h-4zM465 0h4v1396h-4zM485 0h4v1396h-4zM505 0h4v1396h-4zM523 0h4v1396h-4zM543 0h4v1396h-4zM563 0h4v1396h-4zM583 0h4v1396h-4zM603 0h4v1396h-4zM623 0h4v1396h-4zM643 0h4v1396h-4zM661 0h4v1396h-4zM681 0h4v1396h-4zM701 0h4v1396h-4zM721 0h4v1396h-4zM741 0h4v1396h-4zM761 0h4v1396h-4zM781 0h4v1396h-4zM799 0h4v1396h-4zM819 0h4v1396h-4zM839 0h4v1396h-4zM859 0h4v1396h-4zM879 0h4v1396h-4zM899 0h4v1396h-4zM919 0h4v1396h-4zM937 0h4v1396h-4zM957 0h4v1396h-4zM977 0h4v1396h-4zM997 0h4v1396h-4zM1017 0h4v1396h-4zM1037 0h4v1396h-4zM1057 0h4v1396h-4zM1075 0h4v1396h-4zM1095 0h4v1396h-4zM1115 0h4v1396h-4zM1135 0h4v1396h-4zM1155 0h4v1396h-4zM1175 0h4v1396h-4zM1195 0h4v1396h-4zM1213 0h4v1396h-4zM1233 0h4v1396h-4zM1253 0h4v1396h-4zM1273 0h4v1396h-4zM1293 0h4v1396h-4zM1313 0h4v1396h-4zM1333 0h4v1396h-4zM1351 0h4v1396h-4z" opacity=".2"/><path d="M12 0h2v1396h-2zM32 0h2v1396h-2zM52 0h2v1396h-2zM72 0h2v1396h-2zM92 0h2v1396h-2zM110 0h2v1396h-2zM130 0h2v1396h-2zM150 0h2v1396h-2zM170 0h2v1396h-2zM190 0h2v1396h-2zM210 0h2v1396h-2zM230 0h2v1396h-2zM248 0h2v1396h-2zM268 0h2v1396h-2zM288 0h2v1396h-2zM308 0h2v1396h-2zM328 0h2v1396h-2zM348 0h2v1396h-2zM368 0h2v1396h-2zM386 0h2v1396h-2zM406 0h2v1396h-2zM426 0h2v1396h-2zM446 0h2v1396h-2zM466 0h2v1396h-2zM486 0h2v1396h-2zM506 0h2v1396h-2zM524 0h2v1396h-2zM544 0h2v1396h-2zM564 0h2v1396h-2zM584 0h2v1396h-2zM604 0h2v1396h-2zM624 0h2v1396h-2zM644 0h2v1396h-2zM662 0h2v1396h-2zM682 0h2v1396h-2zM702 0h2v1396h-2zM722 0h2v1396h-2zM742 0h2v1396h-2zM762 0h2v1396h-2zM782 0h2v1396h-2zM800 0h2v1396h-2zM820 0h2v1396h-2zM840 0h2v1396h-2zM860 0h2v1396h-2zM880 0h2v1396h-2zM900 0h2v1396h-2zM920 0h2v1396h-2zM938 0h2v1396h-2zM958 0h2v1396h-2zM978 0h2v1396h-2zM998 0h2v1396h-2zM1018 0h2v1396h-2zM1038 0h2v1396h-2zM1058 0h2v1396h-2zM1076 0h2v1396h-2zM1096 0h2v1396h-2zM1116 0h2v1396h-2zM1136 0h2v1396h-2zM1156 0h2v1396h-2zM1176 0h2v1396h-2zM1196 0h2v1396h-2zM1214 0h2v1396h-2zM1234 0h2v1396h-2zM1254 0h2v1396h-2zM1274 0h2v1396h-2zM1294 0h2v1396h-2zM1314 0h2v1396h-2zM1334 0h2v1396h-2zM1352 0h2v1396h-2z" opacity=".575"/><path d="M0 13h1372v4h-1372zM0 33h1372v4h-1372zM0 53h1372v4h-1372zM0 73h1372v4h-1372zM0 93h1372v4h-1372zM0 113h1372v4h-1372zM0 131h1372v4h-1372zM0 151h1372v4h-1372zM0 171h1372v4h-1372zM0 191h1372v4h-1372zM0 211h1372v4h-1372zM0 231h1372v4h-1372zM0 251h1372v4h-1372zM0 269h1372v4h-1372zM0 289h1372v4h-1372zM0 309h1372v4h-1372zM0 329h1372v4h-1372zM0 349h1372v4h-1372zM0 369h1372v4h-1372zM0 389h1372v4h-1372zM0 407h1372v4h-1372zM0 427h1372v4h-1372zM0 447h1372v4h-1372zM0 467h1372v4h-1372zM0 487h1372v4h-1372zM0 507h1372v4h-1372zM0 525h1372v4h-1372zM0 545h1372v4h-1372zM0 565h1372v4h-1372zM0 585h1372v4h-1372zM0 605h1372v4h-1372zM0 625h1372v4h-1372zM0 645h1372v4h-1372zM0 663h1372v4h-1372zM0 683h1372v4h-1372zM0 703h1372v4h-1372zM0 723h1372v4h-1372zM0 743h1372v4h-1372zM0 763h1372v4h-1372zM0 783h1372v4h-1372zM0 801h1372v4h-1372zM0 821h1372v4h-1372zM0 841h1372v4h-1372zM0 861h1372v4h-1372zM0 881h1372v4h-1372zM0 901h1372v4h-1372zM0 921h1372v4h-1372zM0 939h1372v4h-1372zM0 959h1372v4h-1372zM0 979h1372v4h-1372zM0 999h1372v4h-1372zM0 1019h1372v4h-1372zM0 1039h1372v4h-1372zM0 1059h1372v4h-1372zM0 1077h1372v4h-1372zM0 1097h1372v4h-1372zM0 1117h1372v4h-1372zM0 1137h1372v4h-1372zM0 1157h1372v4h-1372zM0 1177h1372v4h-1372zM0 1197h1372v4h-1372zM0 1215h1372v4h-1372zM0 1235h1372v4h-1372zM0 1255h1372v4h-1372zM0 1275h1372v4h-1372zM0 1295h1372v4h-1372zM0 1315h1372v4h-1372zM0 1335h1372v4h-1372zM0 1353h1372v4h-1372zM0 1373h1372v4h-1372zM0 1393h1372v4h-1372z" opacity=".2"/><path d="M0 14h1372v2h-1372zM0 34h1372v2h-1372zM0 54h1372v2h-1372zM0 74h1372v2h-1372zM0 94h1372v2h-1372zM0 114h1372v2h-1372zM0 132h1372v2h-1372zM0 152h1372v2h-1372zM0 172h1372v2h-1372zM0 192h1372v2h-1372zM0 212h1372v2h-1372zM0 232h1372v2h-1372zM0 252h1372v2h-1372zM0 270h1372v2h-1372zM0 290h1372v2h-1372zM0 310h1372v2h-1372zM0 330h1372v2h-1372zM0 350h1372v2h-1372zM0 370h1372v2h-1372zM0 390h1372v2h-1372zM0 408h1372v2h-1372zM0 428h1372v2h-1372zM0 448h1372v2h-1372zM0 468h1372v2h-1372zM0 488h1372v2h-1372zM0 508h1372v2h-1372zM0 526h1372v2h-1372zM0 546h1372v2h-1372zM0 566h1372v2h-1372zM0 586h1372v2h-1372zM0 606h1372v2h-1372zM0 626h1372v2h-1372zM0 646h1372v2h-1372zM0 664h1372v2h-1372zM0 684h1372v2h-1372zM0 704h1372v2h-1372zM0 724h1372v2h-1372zM0 744h1372v2h-1372zM0 764h1372v2h-1372zM0 784h1372v2h-1372zM0 802h1372v2h-1372zM0 822h1372v2h-1372zM0 842h1372v2h-1372zM0 862h1372v2h-1372zM0 882h1372v2h-1372zM0 902h1372v2h-1372zM0 922h1372v2h-1372zM0 940h1372v2h-1372zM0 960h1372v2h-1372zM0 980h1372v2h-1372zM0 1000h1372v2h-1372zM0 1020h1372v2h-1372zM0 1040h1372v2h-1372zM0 1060h1372v2h-1372zM0 1078h1372v2h-1372zM0 1098h1372v2h-1372zM0 1118h1372v2h-1372zM0 1138h1372v2h-1372zM0 1158h1372v2h-1372zM0 1178h1372v2h-1372zM0 1198h1372v2h-1372zM0 1216h1372v2h-1372zM0 1236h1372v2h-1372zM0 1256h1372v2h-1372zM0 1276h1372v2h-1372zM0 1296h1372v2h-1372zM0 1316h1372v2h-1372zM0 1336h1372v2h-1372zM0 1354h1372v2h-1372zM0 1374h1372v2h-1372zM0 1394h1372v2h-1372z" opacity=".575"/></g><path d="M0 1340H125L130 1345V1396H0z" fill="#37343a" opacity=".87"/></svg>
<span class="t blur" style="left:81.82px;top:1604.26px;font-size:31px;line-height:39px;color:#dcdcdc;transform:scaleX(0.9789)">570;437</span>
<div class="ab" style="left:196px;top:639px;width:1127px;height:624px;box-sizing:border-box;border:6px solid #ff2400"></div>
<div class="ab" style="left:72px;top:256px;width:1372px;height:4px;background:#4ab0e4;opacity:.38"></div>
<div class="ab" style="left:72px;top:256px;width:4px;height:1396px;background:#4ab0e4;opacity:.38"></div>
<div class="ab" style="left:72px;top:256px;width:760px;height:4px;background:#4ab0e4"></div>
<div class="ab" style="left:72px;top:256px;width:4px;height:732px;background:#4ab0e4"></div>
<div class="ab" style="left:808px;top:256px;width:24px;height:14px;overflow:hidden"><div class="ab" style="left:0;top:-10px;width:24px;height:24px;border-radius:50%;background:#4ab0e4"></div></div>
<div class="ab" style="left:62px;top:976px;width:24px;height:24px;border-radius:50%;background:#4ab0e4"></div>
</main>
<aside class="panel objects">
<div class="ab" style="left:1452px;top:256px;width:772px;height:1396px;background:#f0f0f0"></div>
<div class="ab" style="left:1452px;top:316px;width:772px;height:6px;background:linear-gradient(#d9d9d9,rgba(240,240,240,0))"></div>
<div class="ab" style="left:1452px;top:256px;width:772px;height:60px;background:#9100ce"></div>
<h2 class="ptitle">
<span class="t" style="left:1481.98px;top:268.81px;font-size:30px;line-height:38px;color:#fff;transform:scaleX(1.0200)">Objects</span>
</h2>
<div class="ab" style="left:1452px;top:1590px;width:772px;height:2px;background:#e9e9e9"></div>
<div class="ab" style="left:1452px;top:1592px;width:772px;height:60px;background:#fff;border-radius:0 0 0 6px"></div>
<svg class="ab" style="left:2112.0px;top:272.0px" width="32" height="32" viewBox="0 0 24 24"><path d="M10 18h4v-2h-4v2zM3 6v2h18V6H3zm3 7h12v-2H6v2z" fill="#fff"/></svg>
<svg class="ab" style="left:2176.0px;top:272.0px" width="32" height="32" viewBox="0 0 24 24"><path d="M19 6.41L17.59 5 12 10.59 6.41 5 5 6.41 10.59 12 5 17.59 6.41 19 12 13.41 17.59 19 19 17.59 13.41 12z" fill="#fff"/></svg>
<ul class="list">
<li>
<div class="ab" style="left:1484px;top:326px;width:48px;height:48px;background:#5e3e6b"></div>
<span class="t" style="left:1595.54px;top:330.80px;font-size:28px;line-height:35px;color:#1c1c1c;transform:scaleX(1.0284)">Background</span>
<svg class="ab" style="left:2160.0px;top:326.0px" width="48" height="48" viewBox="0 0 24 24"><path d="M12 8c1.1 0 2-.9 2-2s-.9-2-2-2-2 .9-2 2 .9 2 2 2zm0 2c-1.1 0-2 .9-2 2s.9 2 2 2 2-.9 2-2-.9-2-2-2zm0 6c-1.1 0-2 .9-2 2s.9 2 2 2 2-.9 2-2-.9-2-2-2z" fill="#1c1c1c"/></svg>
<div class="ab" style="left:1452px;top:380px;width:772px;height:2px;background:#e2e2e2"></div>
</li>
<li>
<svg class="ab" style="left:1486px;top:390px" width="42.5" height="47.5" viewBox="0 0 223 230" preserveAspectRatio="none"><use href="#btn1" width="223" height="230"/></svg>
<span class="t" style="left:1596.63px;top:394.80px;font-size:28px;line-height:35px;color:#1c1c1c;transform:scaleX(0.9345)">Level1</span>
<svg class="ab" style="left:2160.0px;top:390.0px" width="48" height="48" viewBox="0 0 24 24"><path d="M12 8c1.1 0 2-.9 2-2s-.9-2-2-2-2 .9-2 2 .9 2 2 2zm0 2c-1.1 0-2 .9-2 2s.9 2 2 2 2-.9 2-2-.9-2-2-2zm0 6c-1.1 0-2 .9-2 2s.9 2 2 2 2-.9 2-2-.9-2-2-2z" fill="#1c1c1c"/></svg>
<div class="ab" style="left:1452px;top:444px;width:772px;height:2px;background:#e2e2e2"></div>
</li>
<li>
<svg class="ab" style="left:1484.5px;top:454.2px" width="47.6" height="47.6" viewBox="0 0 223 230" preserveAspectRatio="none"><use href="#btn2" width="223" height="230"/></svg>
<span class="t" style="left:1596.53px;top:458.80px;font-size:28px;line-height:35px;color:#1c1c1c;transform:scaleX(0.9858)">Level2</span>
<svg class="ab" style="left:2160.0px;top:454.0px" width="48" height="48" viewBox="0 0 24 24"><path d="M12 8c1.1 0 2-.9 2-2s-.9-2-2-2-2 .9-2 2 .9 2 2 2zm0 2c-1.1 0-2 .9-2 2s.9 2 2 2 2-.9 2-2-.9-2-2-2zm0 6c-1.1 0-2 .9-2 2s.9 2 2 2 2-.9 2-2-.9-2-2-2z" fill="#1c1c1c"/></svg>
<div class="ab" style="left:1452px;top:508px;width:772px;height:2px;background:#e2e2e2"></div>
</li>
<li>
<svg class="ab" style="left:1484.5px;top:518.2px" width="47.6" height="47.6" viewBox="0 0 223 230" preserveAspectRatio="none"><use href="#btn2" width="223" height="230"/></svg>
<span class="t" style="left:1596.51px;top:522.80px;font-size:28px;line-height:35px;color:#1c1c1c;transform:scaleX(0.9933)">Level3</span>
<svg class="ab" style="left:2160.0px;top:518.0px" width="48" height="48" viewBox="0 0 24 24"><path d="M12 8c1.1 0 2-.9 2-2s-.9-2-2-2-2 .9-2 2 .9 2 2 2zm0 2c-1.1 0-2 .9-2 2s.9 2 2 2 2-.9 2-2-.9-2-2-2zm0 6c-1.1 0-2 .9-2 2s.9 2 2 2 2-.9 2-2-.9-2-2-2z" fill="#1c1c1c"/></svg>
<div class="ab" style="left:1452px;top:572px;width:772px;height:2px;background:#e2e2e2"></div>
</li>
<li>
<div class="ab" style="left:1486px;top:584px;width:43px;height:43.6px;background:linear-gradient(45deg,#20a3d8 50%,#4ab0e4 50%);box-shadow:inset 0 0 0 1px #6fc3ee"><div class="ab" style="left:4px;top:4px;width:36px;height:2.8px;background:#eef8fd"></div><div class="ab" style="left:4px;top:36.5px;width:36px;height:3px;background:#eef8fd"></div></div>
<span class="t" style="left:1490.00px;top:583.99px;font-size:35px;line-height:44px;color:#2e3794;font-weight:bold;-webkit-text-stroke:.2px currentColor;font-family:'Liberation Serif',serif;transform:scaleX(0.8707)">Tx</span>
<span class="t" style="left:1596.71px;top:586.80px;font-size:28px;line-height:35px;color:#1c1c1c;transform:scaleX(0.9854)">Gamename</span>
<svg class="ab" style="left:2160.0px;top:582.0px" width="48" height="48" viewBox="0 0 24 24"><path d="M12 8c1.1 0 2-.9 2-2s-.9-2-2-2-2 .9-2 2 .9 2 2 2zm0 2c-1.1 0-2 .9-2 2s.9 2 2 2 2-.9 2-2-.9-2-2-2zm0 6c-1.1 0-2 .9-2 2s.9 2 2 2 2-.9 2-2-.9-2-2-2z" fill="#1c1c1c"/></svg>
<div class="ab" style="left:1452px;top:636px;width:772px;height:2px;background:#e2e2e2"></div>
</li>
<li>
<span class="t" style="left:1713.50px;top:651.40px;font-size:28px;line-height:35px;color:#757575;transform:scaleX(1.0115)">Add a new object</span>
<svg class="ab" style="left:2160.0px;top:644.0px" width="48" height="48" viewBox="0 0 24 24"><path d="M19 13h-6v6h-2v-6H5v-2h6V5h2v6h6v2z" fill="#1c1c1c"/></svg>
</li>
</ul>
<span class="t" style="left:1468.17px;top:1600.20px;font-size:30px;line-height:38px;color:#9e9ea3;transform:scaleX(1.0317)">Search</span>
<svg class="ab" style="left:2169.8px;top:1598.3px" width="48" height="48" viewBox="0 0 24 24"><path d="M15.5 14h-.79l-.28-.27C15.41 12.59 16 11.11 16 9.5 16 5.91 13.09 3 9.5 3S3 5.91 3 9.5 5.91 16 9.5 16c1.61 0 3.09-.59 4.23-1.57l.27.28v.79l5 4.99L20.49 19l-4.99-5zm-6 0C7.01 14 5 11.99 5 9.5S7.01 5 9.5 5 14 7.01 14 9.5 11.99 14 9.5 14z" fill="#7b7586"/></svg>
</aside>
<aside class="panel groups">
<div class="ab" style="left:2232px;top:256px;width:712px;height:1396px;background:#f0f0f0"></div>
<div class="ab" style="left:2232px;top:316px;width:712px;height:6px;background:linear-gradient(#d9d9d9,rgba(240,240,240,0))"></div>
<div class="ab" style="left:2232px;top:256px;width:712px;height:60px;background:#9100ce"></div>
<h2 class="ptitle">
<span class="t" style="left:2261.70px;top:268.81px;font-size:30px;line-height:38px;color:#fff;transform:scaleX(1.0036)">Object Groups</span>
</h2>
<div class="ab" style="left:2232px;top:1590px;width:712px;height:2px;background:#e9e9e9"></div>
<div class="ab" style="left:2232px;top:1592px;width:712px;height:60px;background:#fff;border-radius:0 0 0 6px"></div>
<svg class="ab" style="left:2896.0px;top:272.0px" width="32" height="32" viewBox="0 0 24 24"><path d="M19 6.41L17.59 5 12 10.59 6.41 5 5 6.41 10.59 12 5 17.59 6.41 19 12 13.41 17.59 19 19 17.59 13.41 12z" fill="#fff"/></svg>
<span class="t" style="left:2444.98px;top:330.80px;font-size:28px;line-height:35px;color:#757575;transform:scaleX(1.0183)">Click to add a group</span>
<svg class="ab" style="left:2880.0px;top:324.0px" width="48" height="48" viewBox="0 0 24 24"><path d="M19 13h-6v6h-2v-6H5v-2h6V5h2v6h6v2z" fill="#1c1c1c"/></svg>
<span class="t" style="left:2247.96px;top:1600.20px;font-size:30px;line-height:38px;color:#9e9ea3;transform:scaleX(1.0436)">Search</span>
<svg class="ab" style="left:2889.5px;top:1598.3px" width="48" height="48" viewBox="0 0 24 24"><path d="M15.5 14h-.79l-.28-.27C15.41 12.59 16 11.11 16 9.5 16 5.91 13.09 3 9.5 3S3 5.91 3 9.5 5.91 16 9.5 16c1.61 0 3.09-.59 4.23-1.57l.27.28v.79l5 4.99L20.49 19l-4.99-5zm-6 0C7.01 14 5 11.99 5 9.5S7.01 5 9.5 5 14 7.01 14 9.5 11.99 14 9.5 14z" fill="#7b7586"/></svg>
</aside>
<div class="snackbar" role="status">
<div class="ab" style="left:1188px;top:1508px;width:640px;height:96px;background:#323232;border-radius:8px;box-shadow:0 6px 10px rgba(0,0,0,.2),0 2px 36px rgba(0,0,0,.12),0 10px 14px rgba(0,0,0,.14)"></div>
<span class="t" style="left:1219.96px;top:1539.40px;font-size:28px;line-height:35px;color:#fff;transform:scaleX(1.0203)">Project properly saved</span>
</div>
</div></div>
</body></html>
